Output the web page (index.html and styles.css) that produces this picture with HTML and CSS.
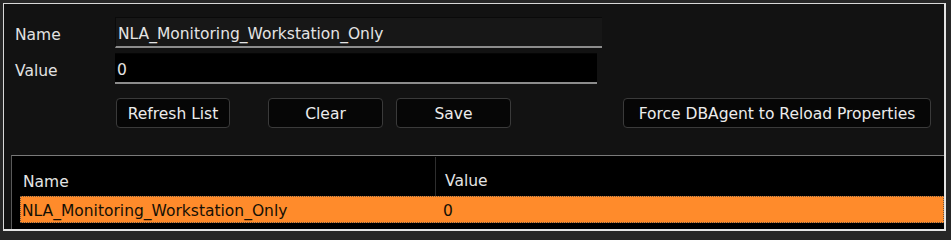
FILE: index.html
```html
<!DOCTYPE html>
<html>
<head>
<meta charset="utf-8">
<link rel="stylesheet" href="styles.css">
</head>
<body>
<div class="frame">
  <div class="panel">
    <div class="form">
      <div class="lbl">Name</div>
      <div class="field field-name">NLA_Monitoring_Workstation_Only</div>
      <div class="lbl">Value</div>
      <div class="field field-value">0</div>
    </div>
    <div class="buttons">
      <div class="btn btn-refresh">Refresh List</div>
      <div class="btn btn-clear">Clear</div>
      <div class="btn btn-save">Save</div>
      <div class="btn btn-force">Force DBAgent to Reload Properties</div>
    </div>
    <div class="table">
      <div class="thead">
        <div class="th col-name">Name</div>
        <div class="th col-value">Value</div>
      </div>
      <div class="row selected">
        <div class="td col-name">NLA_Monitoring_Workstation_Only</div>
        <div class="td col-value">0</div>
      </div>
    </div>
  </div>
</div>
</body>
</html>
```
FILE: styles.css
```css
html, body {
  margin: 0;
  padding: 0;
  background: #262626;
  height: 238px;
  overflow: hidden;
}
body {
  padding: 3px 0 0 3px;
  box-sizing: border-box;
  font-family: "DejaVu Sans", sans-serif;
  font-size: 15.5px;
  color: #e6e6e6;
}
.frame {
  width: 943px;
  box-sizing: border-box;
  border-top: 1px solid #d8d8d8;
  border-left: 1px solid #d8d8d8;
  border-right: 2px solid #e4e4e4;
  border-bottom: 2px solid #e4e4e4;
}
.panel {
  height: 225px;
  background: #121212;
  display: flex;
  flex-direction: column;
  overflow: hidden;
}
.form {
  display: grid;
  grid-template-columns: 100px auto;
  row-gap: 5px;
  padding: 13px 0 0 11px;
  align-items: center;
}
.lbl {
  height: 31px;
  box-sizing: border-box;
  padding-top: 3px;
  line-height: 31px;
  color: #e2e2e2;
}
.field {
  height: 31px;
  box-sizing: border-box;
  line-height: 29px;
  padding: 2px 0 0 2px;
  color: #e4e4e4;
}
.field-name {
  width: 487px;
  background: #171717;
  border-top: 1px solid #0a0a0a;
  border-left: 1px solid #0a0a0a;
  border-bottom: 2px solid #8c8c8c;
}
.field-value {
  width: 482px;
  background: #000;
  border-top: 1px solid #050505;
  border-bottom: 2px solid #8c8c8c;
}
.buttons {
  display: flex;
  margin-top: 14px;
  padding-left: 112px;
}
.btn {
  height: 30px;
  box-sizing: border-box;
  border: 1px solid #3a3a3a;
  border-radius: 4px;
  background: #060606;
  color: #ececec;
  text-align: center;
  padding-top: 2px;
  line-height: 26px;
}
.btn-refresh { width: 114px; }
.btn-clear { width: 115px; margin-left: 38px; }
.btn-save { width: 115px; margin-left: 13px; }
.btn-force { width: 308px; margin-left: 112px; }
.table {
  margin-top: 27px;
  margin-left: 7px;
  flex: 1;
  background: #000;
  border-top: 1px solid #7a7a7a;
  border-left: 1px solid #5a5a5a;
}
.thead {
  display: flex;
  height: 40px;
  align-items: stretch;
}
.th {
  padding-top: 3px;
  line-height: 44px;
  color: #e4e4e4;
}
.thead .col-name {
  width: 412px;
  padding-left: 11px;
  border-right: 1px solid #2e2e2e;
  margin-top: 1px;
}
.thead .col-value {
  padding-left: 9px;
}
.row {
  display: flex;
  margin-left: 8px;
  height: 27px;
  box-sizing: border-box;
}
.selected {
  background: #ff8b2b;
  border: 1px dotted #6b5640;
  color: #151005;
}
.td {
  padding-top: 2px;
  line-height: 25px;
}
.row .col-name {
  width: 421px;
  padding-left: 1px;
}
```
